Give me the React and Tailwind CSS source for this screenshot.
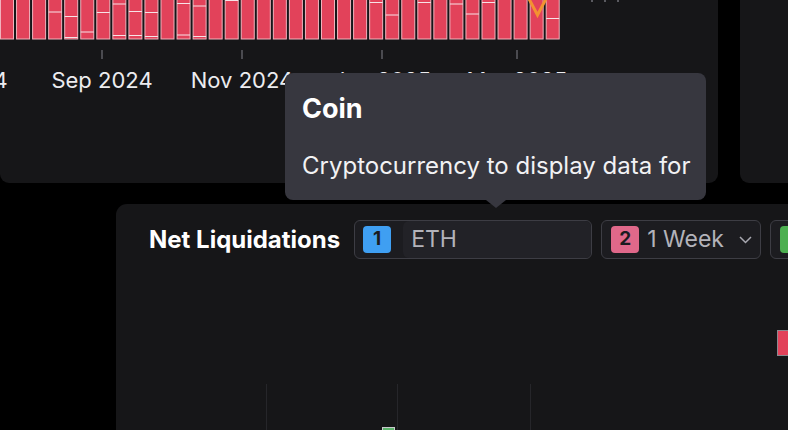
import React from 'react'

const barLines = {
  3: [12], 4: [16.5, 37.5], 5: [32], 6: [12.5], 7: [4, 35.5], 8: [11.5, 35.5], 9: [12.5, 36.5],
  11: [3.5, 35], 12: [6, 36.5], 14: [0.5], 23: [2.5], 24: [15], 26: [2.5], 28: [4], 29: [14], 30: [2.5], 34: [18.5],
}

const ticks = [
  { x: -38, label: 'Jul 2024' },
  { x: 102, label: 'Sep 2024' },
  { x: 242, label: 'Nov 2024' },
  { x: 382, label: 'Jan 2025' },
  { x: 517, label: 'Mar 2025' },
]

const TopChart = () => (
  <svg width="718" height="100" className="block">
    {Array.from({ length: 35 }).map((_, i) => {
      const x = i * 16.05 + 0.5
      return (
        <g key={i}>
          <rect x={x} y={-4} width={13} height={43} fill="#e2425a" stroke="#f1b2bd" strokeWidth="1" />
          {(barLines[i] || []).map((y, j) => (
            <line key={j} x1={x} x2={x + 13} y1={y} y2={y} stroke="#f7e3e7" strokeWidth="1" />
          ))}
        </g>
      )
    })}
    <polyline points="528,-3 537.5,15 547,-3" fill="none" stroke="#f39231" strokeWidth="3" strokeLinejoin="miter" />
    <rect x="591" y="0" width="2" height="2" fill="#5a5a60" />
    <rect x="604" y="0" width="2" height="2" fill="#5a5a60" />
    <rect x="617" y="0" width="2" height="2" fill="#5a5a60" />
    {ticks.map((t) => (
      <g key={t.label}>
        <rect x={t.x - 1} y={50} width={2} height={9} fill="#4b4b50" />
        <text x={t.x} y={88} textAnchor="middle" fill="#ececef" fontSize="22" fontFamily="Inter, sans-serif">{t.label}</text>
      </g>
    ))}
  </svg>
)

const Badge = ({ n, color }) => (
  <span className={`flex items-center justify-center w-[28px] h-[27px] shrink-0 rounded-[4px] text-[19px] font-bold text-[#1b1b1f] ${color}`}>{n}</span>
)

const App = () => {
  return (
    <div className="relative w-[788px] h-[430px] overflow-hidden bg-black font-['Inter',sans-serif]">
      <div className="flex gap-[22px] h-[183px]">
        <div className="w-[718px] shrink-0 bg-[#161618] rounded-b-[9px] overflow-hidden">
          <TopChart />
        </div>
        <div className="flex-1 bg-[#161618] rounded-bl-[9px]" />
      </div>

      <div className="mt-[21px] ml-[116px] w-[760px] h-[226px] bg-[#161618] rounded-tl-[11px] flex flex-col">
        <div className="flex items-center pt-[16px] pl-[33px] h-[55px] shrink-0 whitespace-nowrap">
          <span className="text-[24px] font-bold text-white mr-[14px] shrink-0">Net Liquidations</span>
          <div className="flex items-center w-[238px] h-[39px] border border-[#3d3d44] rounded-[6px] bg-[#1c1c20] pl-[8px] shrink-0">
            <Badge n="1" color="bg-[#3f9ff2]" />
            <div className="flex items-center flex-1 h-full ml-[12px] pl-[8px] bg-[#222227] rounded-[6px] text-[23px] text-[#b3b3ba]">ETH</div>
          </div>
          <div className="flex items-center w-[160px] h-[39px] ml-[9px] border border-[#3d3d44] rounded-[6px] bg-[#1c1c20] pl-[9px] pr-[8px] shrink-0">
            <Badge n="2" color="bg-[#e0688a]" />
            <span className="ml-[8px] text-[23px] text-[#b3b3ba] flex-1">1 Week</span>
            <svg width="13" height="8" viewBox="0 0 13 8"><polyline points="1,1 6.5,6.5 12,1" fill="none" stroke="#a8a8b0" strokeWidth="1.5" /></svg>
          </div>
          <div className="flex items-center w-[120px] h-[39px] ml-[9px] border border-[#3d3d44] rounded-[6px] bg-[#1c1c20] pl-[9px] shrink-0">
            <Badge n="" color="bg-[#4caf50]" />
          </div>
        </div>
        <svg width="760" height="171" className="block">
          <line x1="150.5" x2="150.5" y1="125" y2="171" stroke="#26262a" strokeWidth="1" />
          <line x1="281.5" x2="281.5" y1="125" y2="171" stroke="#26262a" strokeWidth="1" />
          <line x1="414.5" x2="414.5" y1="125" y2="171" stroke="#26262a" strokeWidth="1" />
          <rect x="266.5" y="168.5" width="12" height="5" fill="#5bb26a" stroke="#c9c9cc" strokeWidth="1" />
          <rect x="661.5" y="71.5" width="14" height="25" fill="#e2425a" stroke="#8a8a90" strokeWidth="1" />
        </svg>
      </div>

      <div className="absolute left-[285px] top-[73px] w-[421px] h-[127px] bg-[#37373f] rounded-[8px] px-[17px] pt-[20px] whitespace-nowrap">
        <div className="text-[27px] leading-[32px] font-bold text-white">Coin</div>
        <div className="mt-[26px] text-[24px] leading-[30px] text-[#f2f2f4]">Cryptocurrency to display data for</div>
        <div className="absolute left-[201px] -bottom-[8px] w-0 h-0 border-l-[10px] border-r-[10px] border-t-[8px] border-l-transparent border-r-transparent border-t-[#37373f]" />
      </div>
    </div>
  )
}

export default App
